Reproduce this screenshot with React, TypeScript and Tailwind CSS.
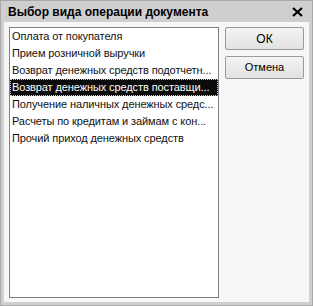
import React from "react";

const items = [
  "Оплата от покупателя",
  "Прием розничной выручки",
  "Возврат денежных средств подотчетн...",
  "Возврат денежных средств поставщи...",
  "Получение наличных денежных средс...",
  "Расчеты по кредитам и займам с кон...",
  "Прочий приход денежных средств",
];

export default function App() {
  return (
    <div
      className="w-[313px] h-[306px] bg-[#a9a9a9] p-px flex flex-col"
      style={{ fontFamily: '"Liberation Sans", Arial, sans-serif' }}
    >
      <div className="flex-1 flex flex-col bg-[#cfcfcf] px-[3px] pb-[3px]">
        <div className="h-[21px] flex items-center justify-between pl-[4px] pr-[6px]">
          <span className="text-[12px] font-bold text-black leading-none">
            Выбор вида операции документа
          </span>
          <svg width="11" height="10" viewBox="0 0 11 10" className="mt-[1px]">
            <path d="M1 1 L10 9 M10 1 L1 9" stroke="#000" strokeWidth="2.2" />
          </svg>
        </div>
        <div className="flex-1 bg-[#f7f7f7] flex gap-[6px] pl-[5px] pt-[5px] pr-[4px] pb-[4px]">
          <div className="w-[210px] border border-[#7f7f7f] bg-white flex flex-col">
            {items.map((t, i) =>
              i === 3 ? (
                <div
                  key={i}
                  className="h-[17px] bg-[#0c0c0c] text-white text-[11px] leading-[15px] px-[1px] border border-dotted border-[#cfcfcf] whitespace-nowrap overflow-hidden tracking-[-0.1px]"
                >
                  {t}
                </div>
              ) : (
                <div
                  key={i}
                  className="h-[17px] text-[#111] text-[11px] leading-[17px] px-[2px] whitespace-nowrap overflow-hidden tracking-[-0.1px]"
                >
                  {t}
                </div>
              )
            )}
          </div>
          <div className="flex flex-col gap-[6px] w-[79px]">
            <button className="h-[23px] border border-[#9a9a9a] rounded-[2px] bg-gradient-to-b from-[#f4f4f4] to-[#e2e2e2] text-[12px] text-black">
              ОК
            </button>
            <button className="h-[23px] border border-[#9a9a9a] rounded-[2px] bg-gradient-to-b from-[#f4f4f4] to-[#e2e2e2] text-[11px] text-black">
              Отмена
            </button>
          </div>
        </div>
      </div>
    </div>
  );
}
